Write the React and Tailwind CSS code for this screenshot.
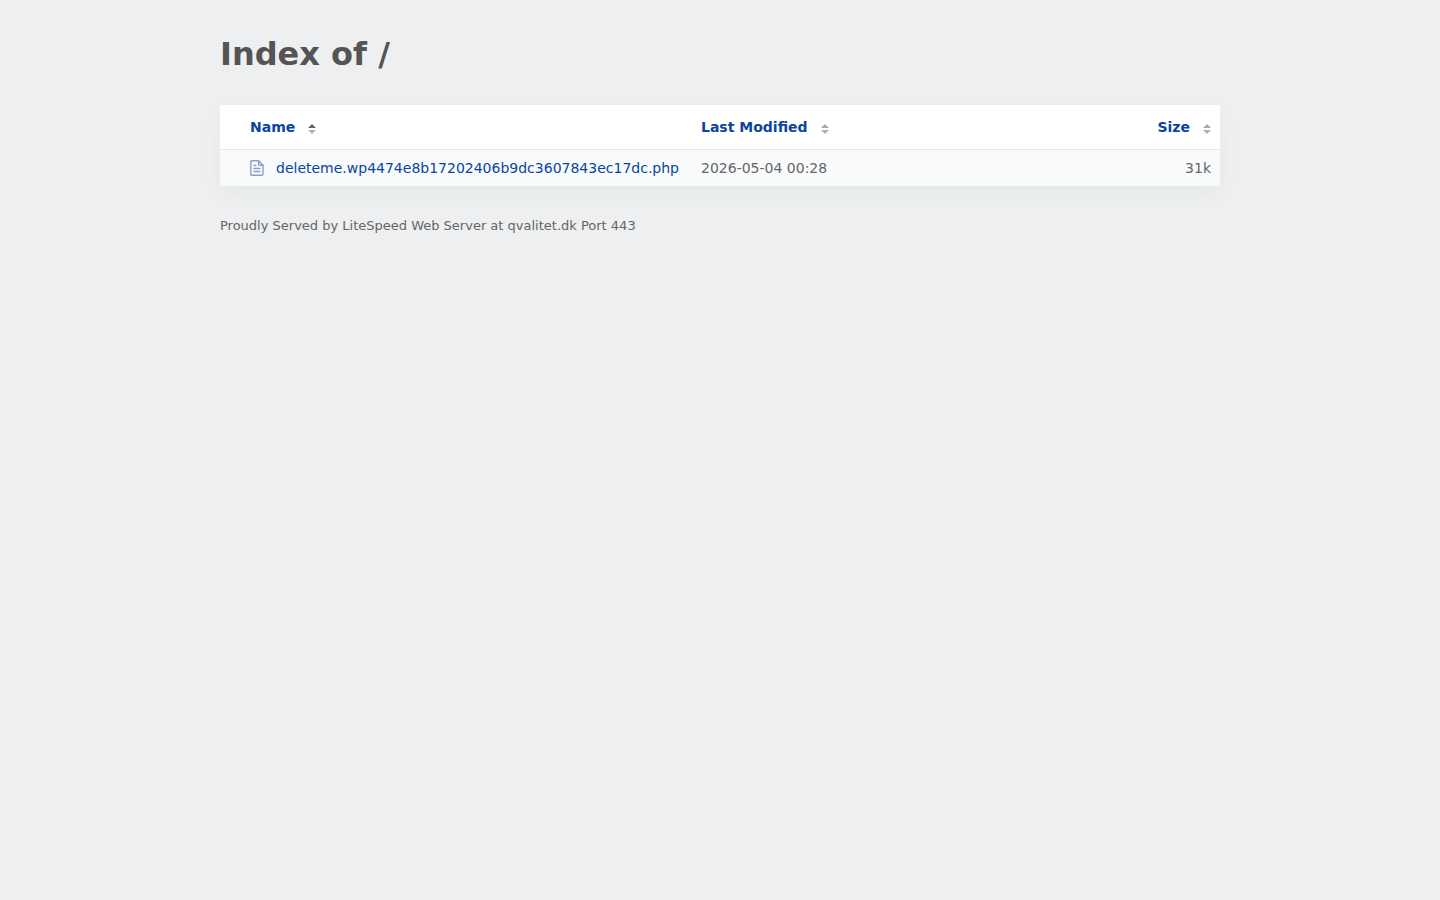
import React from "react";

function SortIcon({ active = false }) {
  return (
    <svg viewBox="0 0 8 10" className="h-2.5 w-2" aria-hidden="true">
      <path d="M4 0 8 4H0Z" fill={active ? "#666666" : "#a9a9a9"} />
      <path d="M0 6H8L4 10Z" fill="#b0b0b0" />
    </svg>
  );
}

function FileIcon() {
  return (
    <svg
      viewBox="0 0 14 16"
      className="h-4 w-3.5 shrink-0"
      fill="none"
      stroke="#8e9dc6"
      strokeWidth="1.4"
      strokeLinejoin="round"
      strokeLinecap="round"
      aria-hidden="true"
    >
      <path d="M2 .8H8.6L13 5.2V14Q13 15.2 11.8 15.2H2Q.8 15.2.8 14V2Q.8.8 2 .8Z" />
      <path d="M8.6.8V4.2Q8.6 5.2 9.6 5.2H13" />
      <path d="M4 5.5H5.8M4 8.5H10M4 11.5H10" />
    </svg>
  );
}

function SortButton({ label, active }) {
  return (
    <button
      type="button"
      className="inline-flex cursor-pointer items-center gap-[13px] font-bold text-[#0a459e]"
    >
      {label}
      <span className="pt-1">
        <SortIcon active={active} />
      </span>
    </button>
  );
}

export default function App() {
  return (
    <div className="min-h-screen bg-[#edeff0] px-5 pt-8 font-['DejaVu_Sans',sans-serif] text-sm text-[#666666]">
      <main className="mx-auto max-w-[1000px]">
        <h1 className="text-[32px] leading-[44px] font-bold text-[#545454]">Index of /</h1>
        <table className="mt-[29px] w-full border-collapse bg-white shadow-[0_8px_20px_rgba(30,50,60,0.04)]">
          <thead>
            <tr className="h-11 border-b border-[#e6e9ec] text-left">
              <th scope="col" aria-sort="ascending" className="w-[471px] pl-[30px]">
                <SortButton label="Name" active />
              </th>
              <th scope="col" className="pl-2.5">
                <SortButton label="Last Modified" />
              </th>
              <th scope="col" className="pr-[9px] text-right">
                <SortButton label="Size" />
              </th>
            </tr>
          </thead>
          <tbody>
            <tr className="h-[37px] bg-[#f8fafc]">
              <td className="pl-[30px]">
                <a
                  href="#deleteme.wp4474e8b17202406b9dc3607843ec17dc.php"
                  className="flex items-center gap-3 text-[#0a459e]"
                >
                  <FileIcon />
                  deleteme.wp4474e8b17202406b9dc3607843ec17dc.php
                </a>
              </td>
              <td className="pl-2.5">2026-05-04 00:28</td>
              <td className="pr-[9px] text-right">31k</td>
            </tr>
          </tbody>
        </table>
        <footer className="mt-[30px] text-[13px] leading-5">
          Proudly Served by LiteSpeed Web Server at qvalitet.dk Port 443
        </footer>
      </main>
    </div>
  );
}
